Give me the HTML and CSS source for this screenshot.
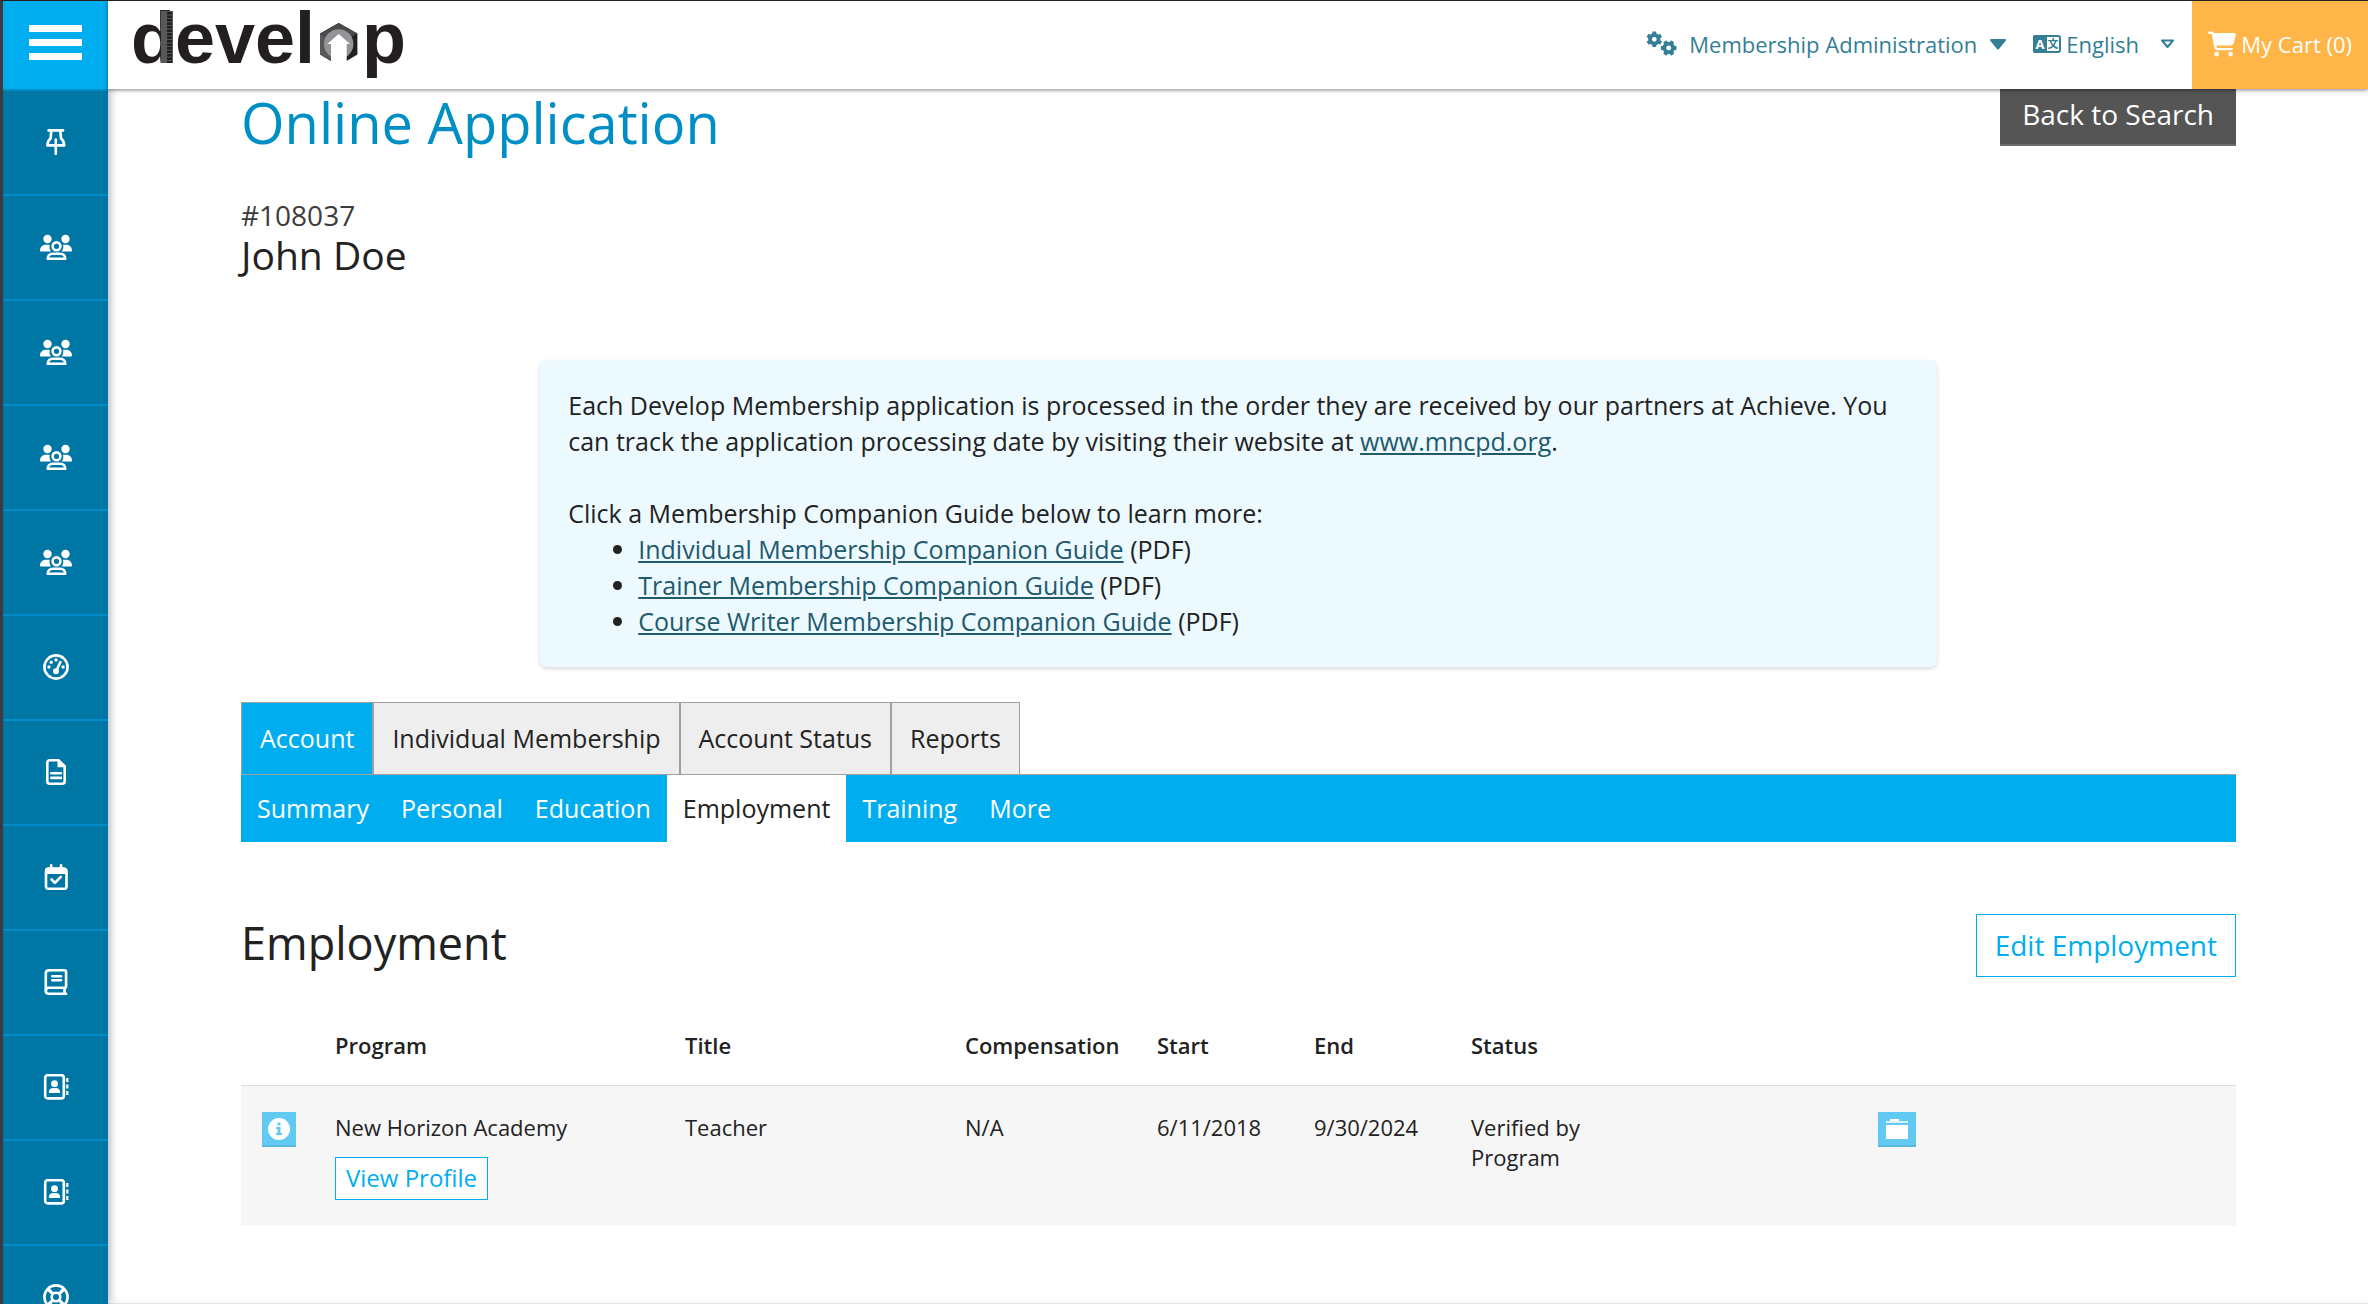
FILE: index.html
```
<!DOCTYPE html>
<html lang="en">
<head>
    <meta charset="UTF-8">
    <meta name="viewport" content="width=device-width, initial-scale=1.0">
    <title>Develop - Online Application</title>
    <link rel="stylesheet" href="styles.css">
</head>
<body>

<!-- Shared icons -->
<svg class="sprite" aria-hidden="true">
    <symbol id="icon-users" viewBox="0 0 32 26">
        <g fill="currentColor">
            <circle cx="7.500" cy="5" r="4.200"/>
            <circle cx="25.500" cy="5" r="4.200"/>
            <path d="M1 17.500c-.6 0-1-.4-1-1 0-3.200 2.400-5.800 5.600-5.800h4.200c-.8 2.700 0 5.200 1.400 6.800z"/>
            <path d="M31 17.500c.6 0 1-.4 1-1 0-3.200-2.400-5.800-5.600-5.800h-3.400c.8 2.700 0 5.200-1.400 6.800z"/>
        </g>
        <g fill="none" stroke="currentColor" stroke-width="2.600">
            <circle cx="16.500" cy="12.300" r="3.900"/>
            <path d="M7.700 24.800c0-3 2-5.100 5-5.100h7.600c3 0 5 2.100 5 5.100z" stroke-linejoin="round"/>
        </g>
    </symbol>
    <symbol id="icon-contact" viewBox="0 0 26 26">
        <rect x="2.200" y="1.200" width="18.600" height="23.200" rx="2.500" fill="none" stroke="currentColor" stroke-width="2.600"/>
        <circle cx="11.500" cy="9.700" r="3.400" fill="currentColor"/>
        <path d="M5.800 18.200c0-2.600 2-4.200 4.400-4.200h2.600c2.400 0 4.400 1.600 4.400 4.200 0 .6-.4.800-.8.800H6.600c-.5 0-.8-.2-.8-.8z" fill="currentColor"/>
        <path d="M24.300 4v4M24.300 10.500v4M24.300 17v4" stroke="currentColor" stroke-width="2.200"/>
    </symbol>
</svg>

<div class="layout">
    <nav class="sidebar" aria-label="Main">
        <button class="menu-toggle" aria-label="Open menu">
            <span></span>
            <span></span>
            <span></span>
        </button>
        <a class="side-link" href="#" aria-label="Pinned">
            <svg width="26" height="26" viewBox="0 0 26 26" fill="none" stroke="currentColor" stroke-width="2.600" stroke-linecap="round" stroke-linejoin="round">
                <path d="M5.600 1.400h14.400"/>
                <path d="M8.300 1.400l-.7 8C5.500 11 4.600 13 4.400 16.400h16.800c-.2-3.400-1.100-5.400-3.200-7l-.7-8"/>
                <path d="M12.800 10.500v14.300"/>
            </svg>
        </a>
        <a class="side-link" href="#" aria-label="Members"><svg width="32" height="26"><use href="#icon-users"/></svg></a>
        <a class="side-link" href="#" aria-label="Groups"><svg width="32" height="26"><use href="#icon-users"/></svg></a>
        <a class="side-link" href="#" aria-label="Organizations"><svg width="32" height="26"><use href="#icon-users"/></svg></a>
        <a class="side-link" href="#" aria-label="Trainers"><svg width="32" height="26"><use href="#icon-users"/></svg></a>
        <a class="side-link" href="#" aria-label="Dashboard">
            <svg width="26" height="26" viewBox="0 0 26 26">
                <circle cx="13" cy="13" r="11.600" fill="none" stroke="currentColor" stroke-width="2.600"/>
                <g fill="currentColor">
                    <circle cx="5.900" cy="13" r="1.700"/>
                    <circle cx="8.200" cy="8.200" r="1.700"/>
                    <circle cx="13" cy="5.900" r="1.700"/>
                    <circle cx="20.100" cy="13" r="1.700"/>
                    <circle cx="13" cy="17.300" r="3"/>
                </g>
                <path d="M13.500 16.500L17.400 8" stroke="currentColor" stroke-width="2.600" stroke-linecap="round"/>
            </svg>
        </a>
        <a class="side-link" href="#" aria-label="Documents">
            <svg width="26" height="26" viewBox="0 0 26 26" fill="none" stroke="currentColor" stroke-width="2.600">
                <path d="M15.500 1.300H6.800c-1.500 0-2.500 1-2.500 2.500v18.400c0 1.500 1 2.500 2.500 2.500h12.400c1.500 0 2.500-1 2.500-2.500V7.300z"/>
                <path d="M14.500 1.500v6.700h7" fill="currentColor" stroke="none"/>
                <path d="M8.300 14.200h9.600M8.300 18.900h9.600" stroke-linecap="round"/>
            </svg>
        </a>
        <a class="side-link" href="#" aria-label="Events">
            <svg width="26" height="26" viewBox="0 0 26 26">
                <path d="M5 3.200h16c1.700 0 3 1.300 3 3V10H2V6.200c0-1.700 1.300-3 3-3z" fill="currentColor"/>
                <rect x="3" y="5" width="20.500" height="19.700" rx="2.200" fill="none" stroke="currentColor" stroke-width="2.600"/>
                <path d="M8.200 1.300v3M18 1.300v3" stroke="currentColor" stroke-width="2.600" stroke-linecap="round"/>
                <path d="M8.600 15.500l3.300 3.300 5.900-5.900" fill="none" stroke="currentColor" stroke-width="2.600" stroke-linecap="round" stroke-linejoin="round"/>
            </svg>
        </a>
        <a class="side-link" href="#" aria-label="Courses">
            <svg width="26" height="26" viewBox="0 0 26 26" fill="none" stroke="currentColor" stroke-width="2.600" stroke-linecap="round">
                <path d="M5.800 1.300h15.700c1 0 1.600.6 1.600 1.600v14.300c0 1-.6 1.600-1.600 1.600H5.800c-1.700 0-3 1.200-3 2.900s1.300 3 3 3h17.300"/>
                <path d="M2.800 21.700V4.300c0-1.700 1.300-3 3-3"/>
                <path d="M21.500 19v5.500"/>
                <path d="M9.300 7.200h8.800M9.300 11.200h8.800"/>
            </svg>
        </a>
        <a class="side-link" href="#" aria-label="Directory"><svg width="26" height="26"><use href="#icon-contact"/></svg></a>
        <a class="side-link" href="#" aria-label="Contacts"><svg width="26" height="26"><use href="#icon-contact"/></svg></a>
        <a class="side-link" href="#" aria-label="Help">
            <svg width="26" height="26" viewBox="0 0 26 26" fill="none" stroke="currentColor" stroke-width="2.600">
                <circle cx="13" cy="13" r="11.600"/>
                <circle cx="13" cy="13" r="4.300"/>
                <path d="M4.500 4.500l5.300 5.300M21.500 4.500l-5.300 5.300M4.500 21.500l5.300-5.300M21.500 21.500l-5.300-5.300" stroke-width="3.200"/>
            </svg>
        </a>
    </nav>

    <div class="page">
        <header class="topbar">
            <a class="logo" href="#" aria-label="Develop home">
                <svg width="274" height="78" viewBox="0 -14 274 92">
                    <g class="logo-text">
                        <text x="-2" y="53">devel</text>
                        <text x="229" y="53">p</text>
                    </g>
                    <!-- Ruler over the stem of the d -->
                    <rect x="28" y="1" width="12" height="52" fill="#58585a"/>
                    <path d="M36.500 2v51" stroke="#231f20" stroke-width="5" stroke-dasharray="2.500 1"/>
                    <!-- Hexagon with house arrow -->
                    <path d="M205.700 13l18.700 10.500v21L213.500 51h-15.600L187 44.500v-21z" fill="#231f20"/>
                    <path d="M205.700 13l18.700 10.500-18.700 10.500L187 23.500z" fill="#4a4a4c"/>
                    <path d="M187 23.500l18.700 10.500L198 51l-11-6.500z" fill="#58585a"/>
                    <circle cx="205.700" cy="34" r="14.700" fill="#929497"/>
                    <path d="M205.700 24L217 34h-3.300v18h-15.700V34h-3.800z" fill="#fff"/>
                </svg>
            </a>
            <div class="topbar-right">
                <button class="admin-menu">
                    <svg width="31" height="26" viewBox="0 0 31 26" fill="none" stroke="currentColor">
                        <circle cx="8.300" cy="8.300" r="4.300" stroke-width="3.800"/>
                        <path d="M8.300.5v3M8.300 13.100v3M1.500 4.400l2.600 1.500M12.500 10.700l2.600 1.500M1.500 12.200l2.600-1.500M12.500 5.900l2.600-1.500" stroke-width="3.800"/>
                        <circle cx="22.700" cy="17" r="4.300" stroke-width="3.800"/>
                        <path d="M14.900 17h3M27.500 17h3M18.800 10.200l1.500 2.600M25.100 21.200l1.500 2.600M26.600 10.200l-1.500 2.600M20.300 21.200l-1.500 2.600" stroke-width="3.800"/>
                    </svg>
                    Membership Administration
                    <svg class="caret" width="18" height="11" viewBox="0 0 18 11"><path d="M2 1h14L9 9.500z" fill="currentColor" stroke="currentColor" stroke-width="2" stroke-linejoin="round"/></svg>
                </button>
                <div class="language">
                    <svg width="28" height="18" viewBox="0 0 28 18">
                        <rect x="1" y="1" width="26" height="16" rx="2" fill="#fff" stroke="currentColor" stroke-width="2"/>
                        <path d="M2 0h12v18H2a2 2 0 0 1-2-2V2a2 2 0 0 1 2-2z" fill="currentColor"/>
                        <text class="glyph-latin" x="7" y="14">A</text>
                        <text class="glyph-cjk" x="20" y="13">文</text>
                    </svg>
                    <label class="visually-hidden" for="language">Language</label>
                    <select id="language">
                        <option>English</option>
                    </select>
                    <svg width="15" height="10" viewBox="0 0 15 10"><path d="M2 1.500h11L7.500 8z" fill="none" stroke="currentColor" stroke-width="2" stroke-linejoin="round"/></svg>
                </div>
                <a class="cart" href="#">
                    <svg width="28" height="26" viewBox="0 0 576 512" fill="currentColor"><path d="M0 24C0 10.700 10.700 0 24 0H69.500c22 0 41.500 12.800 50.600 32h411c26.300 0 45.500 25 38.600 50.400l-41 152.300c-8.500 31.400-37 53.300-69.500 53.300H170.700l5.400 28.500c2.200 11.300 12.100 19.500 23.600 19.500H488c13.300 0 24 10.700 24 24s-10.700 24-24 24H199.700c-34.600 0-64.300-24.600-70.700-58.500L77.400 54.500c-.7-3.800-4-6.500-7.900-6.500H24C10.700 48 0 37.300 0 24zM128 464a48 48 0 1 1 96 0 48 48 0 1 1-96 0zm336-48a48 48 0 1 1 0 96 48 48 0 1 1 0-96z"/></svg>
                    My Cart (0)
                </a>
            </div>
        </header>

        <main class="content">
            <div class="title-row">
                <h1>Online Application</h1>
                <button class="btn btn-dark">Back to Search</button>
            </div>

            <div class="applicant">
                <div class="applicant-id">#108037</div>
                <div class="applicant-name">John Doe</div>
            </div>

            <section class="notice">
                <p>Each Develop Membership application is processed in the order they are received by our partners at Achieve. You can track the application processing date by visiting their website at <a href="#">www.mncpd.org</a>.</p>
                <p>Click a Membership Companion Guide below to learn more:</p>
                <ul>
                    <li><a href="#">Individual Membership Companion Guide</a> (PDF)</li>
                    <li><a href="#">Trainer Membership Companion Guide</a> (PDF)</li>
                    <li><a href="#">Course Writer Membership Companion Guide</a> (PDF)</li>
                </ul>
            </section>

            <nav class="tabs" aria-label="Account sections">
                <a class="tab active" href="#">Account</a>
                <a class="tab" href="#">Individual Membership</a>
                <a class="tab" href="#">Account Status</a>
                <a class="tab" href="#">Reports</a>
            </nav>
            <nav class="subtabs" aria-label="Account pages">
                <a class="subtab" href="#">Summary</a>
                <a class="subtab" href="#">Personal</a>
                <a class="subtab" href="#">Education</a>
                <a class="subtab active" href="#">Employment</a>
                <a class="subtab" href="#">Training</a>
                <a class="subtab" href="#">More</a>
            </nav>

            <div class="section-head">
                <h2>Employment</h2>
                <button class="btn btn-outline">Edit Employment</button>
            </div>

            <table class="employment">
                <colgroup>
                    <col class="col-info">
                    <col class="col-program">
                    <col class="col-title">
                    <col class="col-comp">
                    <col class="col-date">
                    <col class="col-date">
                    <col class="col-status">
                    <col>
                </colgroup>
                <thead>
                    <tr>
                        <th></th>
                        <th>Program</th>
                        <th>Title</th>
                        <th>Compensation</th>
                        <th>Start</th>
                        <th>End</th>
                        <th>Status</th>
                        <th></th>
                    </tr>
                </thead>
                <tbody>
                    <tr>
                        <td>
                            <button class="icon-btn info" aria-label="Details">
                                <svg width="24" height="24" viewBox="0 0 24 24">
                                    <circle cx="12" cy="12" r="11" fill="#fff"/>
                                    <path d="M10.500 5.500h3v3h-3zM9 10h4.500v6H15v2H9v-2h1.500v-4H9z" fill="#62c9f2"/>
                                </svg>
                            </button>
                        </td>
                        <td>
                            New Horizon Academy
                            <button class="btn-small">View Profile</button>
                        </td>
                        <td>Teacher</td>
                        <td>N/A</td>
                        <td>6/11/2018</td>
                        <td>9/30/2024</td>
                        <td><div class="status">Verified by Program</div></td>
                        <td>
                            <button class="icon-btn folder" aria-label="Open folder">
                                <svg width="22" height="20" viewBox="0 0 22 20">
                                    <path d="M4 0h9v2h9v2H0V2h4z" fill="#d8f1fb"/>
                                    <path d="M4 0h9v2H4z" fill="#fff"/>
                                    <path d="M0 6h22v14H0z" fill="#fff"/>
                                </svg>
                            </button>
                        </td>
                    </tr>
                </tbody>
            </table>
        </main>
        <footer class="footer"></footer>
    </div>
</div>

</body>
</html>
```
FILE: styles.css
```
* {
    box-sizing: border-box;
}
body {
    margin: 0;
    background-color: #fff;
    color: #222;
    font-family: "Open Sans", sans-serif;
    font-size: 25px;
    line-height: 36px;
}
button, select {
    font-family: inherit;
    color: inherit;
    cursor: pointer;
}
a {
    color: inherit;
    text-decoration: none;
}
svg {
    display: block;
    flex: none;
}
.sprite {
    display: none;
}
.visually-hidden {
    position: absolute;
    width: 1px;
    height: 1px;
    overflow: hidden;
    clip-path: inset(50%);
}
.layout {
    display: flex;
    height: 100vh;
    overflow: hidden;
    border-top: 1px solid #231f20;
    border-left: 3px solid #3c3c3c;
}

/* Sidebar */
.sidebar {
    position: relative;
    z-index: 2;
    flex: none;
    width: 105px;
    background-color: #0076a5;
    color: #fff;
    box-shadow: 2px 0 8px rgba(0, 0, 0, 0.3);
}
.menu-toggle {
    display: flex;
    flex-direction: column;
    align-items: center;
    gap: 7px;
    width: 100%;
    height: 88px;
    padding: 24px 0 0;
    border: none;
    background-color: #00aeef;
}
.menu-toggle span {
    width: 53px;
    height: 7px;
    background-color: #fff;
}
.side-link {
    display: flex;
    align-items: center;
    justify-content: center;
    height: 105px;
    padding-bottom: 2px;
    border-bottom: 2px solid #008cc6;
}
.menu-toggle + .side-link {
    height: 107px;
    border-top: 2px solid #008cc6;
}

/* Top bar */
.page {
    display: flex;
    flex-direction: column;
    flex: 1;
    min-width: 0;
}
.topbar {
    position: relative;
    z-index: 3;
    display: flex;
    justify-content: space-between;
    flex: none;
    height: 88px;
    background-color: #fff;
    box-shadow: 0 1px 4px rgba(0, 0, 0, 0.5);
}
.logo {
    padding: 9px 0 0 25px;
}
.logo svg {
    width: 274px;
    height: 92px;
    margin-top: -14px;
    overflow: visible;
}
.logo-text {
    font: bold 72px "Liberation Sans", Arial, sans-serif;
    fill: #231f20;
}
.topbar-right {
    display: flex;
    font-size: 22px;
    color: #357f96;
}
.admin-menu {
    display: flex;
    align-items: center;
    gap: 12px;
    padding: 0 26px 2px;
    border: none;
    background: none;
    font-size: 22px;
}
.language {
    display: flex;
    align-items: center;
    gap: 5px;
    padding: 0 17px 2px 0;
}
.language select {
    appearance: none;
    height: 36px;
    margin-right: 16px;
    padding: 0;
    border: none;
    background: none;
    font-size: 22px;
    line-height: 36px;
}
.glyph-latin {
    font: bold 13px "Open Sans", sans-serif;
    fill: #fff;
    text-anchor: middle;
}
.glyph-cjk {
    font: bold 11px "Noto Sans CJK SC", sans-serif;
    fill: currentColor;
    text-anchor: middle;
}
.cart {
    display: flex;
    align-items: center;
    gap: 5px;
    padding: 0 16px 2px;
    background-color: #ffb547;
    color: #fff;
}

/* Content */
.content {
    flex: 1;
    padding: 0 132px 0 133px;
}
.title-row {
    display: flex;
    justify-content: space-between;
    align-items: flex-start;
    margin-top: -6px;
}
h1, h2 {
    margin: 0;
    font-weight: 400;
}
h1 {
    font-size: 56px;
    line-height: 78px;
    color: #008fc5;
}
.btn {
    height: 63px;
    border: none;
    font-size: 28px;
}
.btn-dark {
    padding: 0 22px;
    background-color: #555;
    border-bottom: 2px solid #6b6b6b;
    color: #fff;
}
.btn-outline {
    padding: 0 18px 2px;
    border: 1px solid #00aeef;
    background-color: #fff;
    color: #00aeef;
}
.applicant {
    margin-top: 34px;
    line-height: 40px;
}
.applicant-id {
    font-size: 28px;
    color: #3c3c3c;
}
.applicant-name {
    font-size: 39px;
}
.notice {
    width: 70%;
    margin: 85px auto 35px;
    padding: 27px 28px 28px;
    border-radius: 7px;
    background-color: #ecfaff;
    box-shadow: 0 2px 4px rgba(0, 0, 0, 0.15);
}
.notice p {
    margin: 0;
}
.notice p + p {
    margin-top: 36px;
}
.notice ul {
    margin: 0;
    padding-left: 70px;
}
.notice a {
    color: #22596c;
    text-decoration: underline;
}

/* Tabs */
.tabs {
    display: flex;
    border-bottom: 1px solid #a0a0a0;
}
.tab {
    padding: 17px 18px 18px;
    border: 1px solid #a0a0a0;
    border-bottom: none;
    background-color: #eee;
}
.tab.active {
    background-color: #00aeef;
    color: #fff;
}
.subtabs {
    display: flex;
    background-color: #00aeef;
    color: #fff;
}
.subtab {
    padding: 15px 16px 16px;
}
.subtab.active {
    background-color: #fff;
    color: #222;
}

/* Employment */
.section-head {
    display: flex;
    justify-content: space-between;
    align-items: flex-start;
    margin-top: 72px;
}
h2 {
    font-size: 45px;
    line-height: 58px;
}
.employment {
    width: 100%;
    margin-top: 27px;
    border-collapse: collapse;
    table-layout: fixed;
    font-size: 22px;
    line-height: 30px;
}
.employment th, .employment td {
    padding: 26px 18px;
    text-align: left;
    vertical-align: top;
}
.employment th {
    padding-bottom: 25px;
    font-weight: 600;
}
.employment thead tr {
    border-bottom: 1px solid #dcdcdc;
}
.employment tbody tr {
    background-color: #f6f6f6;
}
.col-info {
    width: 76px;
}
.col-program {
    width: 350px;
}
.col-title {
    width: 280px;
}
.col-comp {
    width: 192px;
}
.col-date {
    width: 157px;
}
.col-status {
    width: 407px;
}
.status {
    width: 150px;
}
.icon-btn {
    display: flex;
    align-items: center;
    justify-content: center;
    height: 35px;
    padding: 0;
    border: none;
    border-bottom: 2px solid #58b9e0;
    background-color: #62c9f2;
}
.info {
    width: 34px;
    margin-left: 3px;
}
.folder {
    width: 38px;
}
.btn-small {
    display: block;
    height: 43px;
    margin-top: 15px;
    padding: 0 10px 2px;
    border: 1px solid #00aeef;
    background-color: #fff;
    color: #00aeef;
    font-size: 24px;
}

/* Footer edge */
.footer {
    position: relative;
    flex: none;
    height: 1px;
    background-color: #e4e4e4;
    box-shadow: 0 -1px 6px rgba(0, 0, 0, 0.15);
}
```
